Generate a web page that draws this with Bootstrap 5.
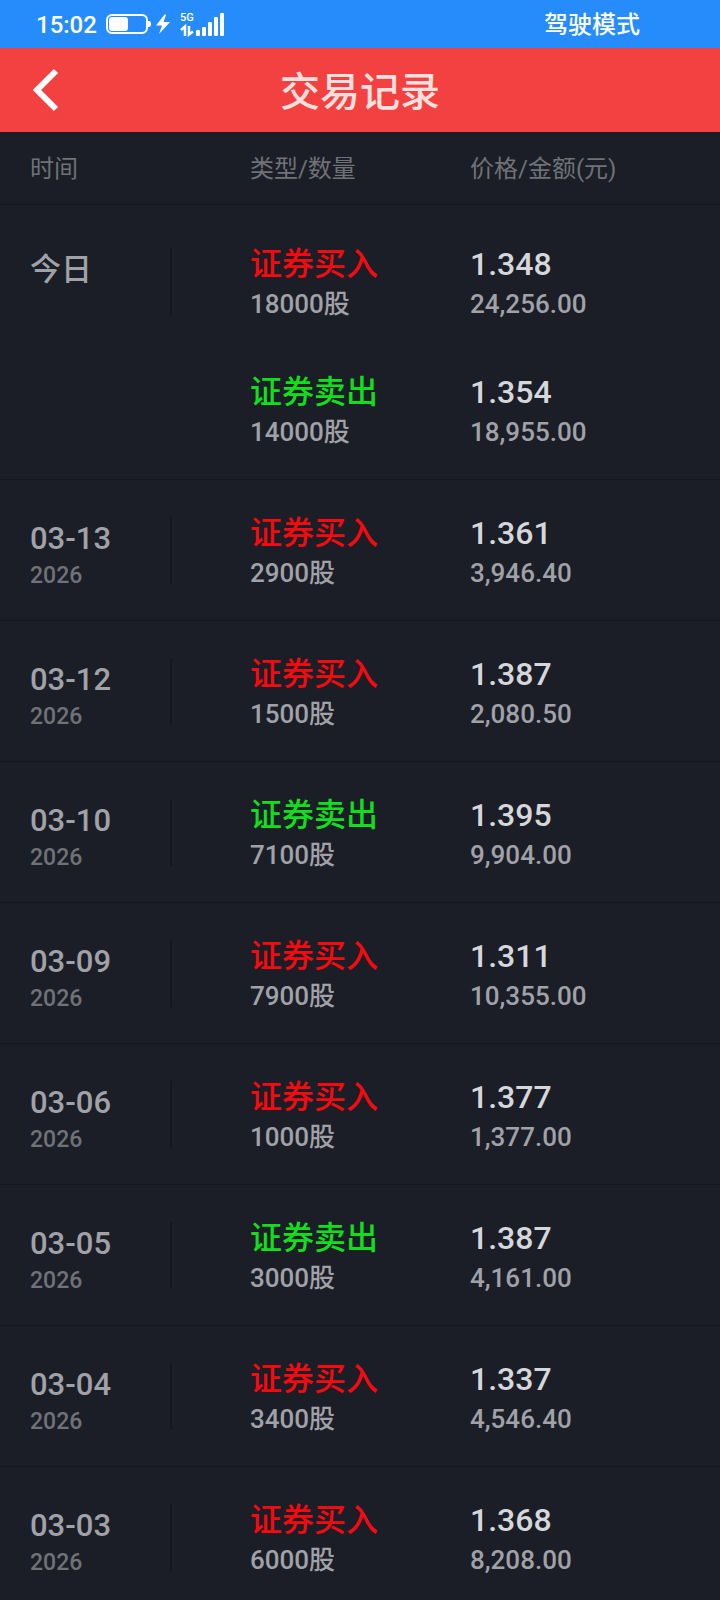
<!DOCTYPE html>
<html lang="zh-CN">
<head>
<meta charset="utf-8">
<meta name="viewport" content="width=device-width, initial-scale=1">
<title>交易记录</title>
<link href="https://cdn.jsdelivr.net/npm/bootstrap@5.3.0/dist/css/bootstrap.min.css" rel="stylesheet">
<style>
  body { background: #1b1e27; color: #a1a2a7; font-family: Roboto, "Noto Sans CJK SC", sans-serif; font-weight: 500; }
  .status-bar { height: 48px; background: #268cfb; color: #fff; padding: 2px 80px 0 36px; font-size: 24px; line-height: 46px; }
  .title-bar { height: 84px; background: #f34141; padding-top: 4px; }
  .title-bar h1 { font-size: 40px; line-height: 82px; font-weight: 500; color: #fde0dd; }
  .back-btn { left: 24px; top: 14px; width: 44px; height: 56px; }
  .records { table-layout: fixed; border-collapse: separate; border-spacing: 0; }
  .records th, .records td { padding: 0; vertical-align: top; }
  .col-day { width: 34.72%; }
  .col-kind { width: 30.56%; }
  .records thead th { height: 73px; padding-top: 19px; font-size: 24px; line-height: 36px; font-weight: 400; color: #707278; }
  .records .ps-day { padding-left: 30px; }
  .records thead th, .records .group-end { border-bottom: 1px solid #15171e; }
  .records tbody td, .records tbody th { padding-top: 33px; font-weight: 500; }
  .records tbody .group-end { padding-bottom: 27px; }
  .records .first-entry > * { padding-top: 39px; }
  .records .more-entry > * { padding-top: 48px; }
  .day-box { width: 142px; height: 67px; margin-top: 4px; padding-top: 2px; border-right: 2px solid #15171e; }
  .day-text { font-size: 31px; line-height: 40px; }
  .year-text { font-size: 23px; line-height: 34px; color: #707278; }
  .kind-text { font-size: 32px; line-height: 40px; }
  .buy { color: #f50a0f; }
  .sell { color: #12df1c; }
  .price-text { font-size: 32px; line-height: 40px; color: #d6d7db; }
  .sub-text { font-size: 26px; line-height: 40px; }
</style>
</head>
<body>
<div class="vh-100 d-flex flex-column overflow-hidden">
  <div class="status-bar d-flex align-items-center flex-shrink-0">
    <span>15:02</span>
    <svg class="ms-2" width="122" height="30" viewBox="0 0 122 30" fill="#fff" aria-hidden="true">
      <rect x="2" y="5" width="40" height="18" rx="5" fill="none" stroke="#fff" stroke-width="2"/>
      <rect x="4" y="7" width="19" height="14" rx="3"/>
      <path d="M43 11h1q2 0 2 3t-2 3h-1z"/>
      <path d="M60 4 51 15.500h6L54 24l11-12h-6.500L61 5z"/>
      <text x="75" y="11" font-size="11">5G</text>
      <path d="M80 26v-9.500l-4 3.500M84 16v8.500l4-3" fill="none" stroke="#fff" stroke-width="2.500"/>
      <g>
        <rect x="91" y="20" width="4" height="6" rx="1"/><rect x="97" y="17" width="4" height="9" rx="1"/>
        <rect x="103" y="12" width="4" height="14" rx="1"/><rect x="109" y="7" width="4" height="19" rx="1"/>
        <rect x="115" y="3" width="4" height="23" rx="1"/>
      </g>
    </svg>
    <span class="ms-auto">驾驶模式</span>
  </div>
  <header class="title-bar position-relative text-center flex-shrink-0">
    <button type="button" class="back-btn btn p-0 border-0 position-absolute d-flex" aria-label="返回">
      <svg width="44" height="56" viewBox="0 0 44 56" fill="none" stroke="#fff" stroke-width="6"><path d="M32 9 13 28 32 47"/></svg>
    </button>
    <h1 class="m-0">交易记录</h1>
  </header>
  <main class="flex-fill overflow-hidden">
    <table class="records w-100">
      <colgroup><col class="col-day"><col class="col-kind"><col></colgroup>
      <thead>
        <tr><th scope="col" class="ps-day">时间</th><th scope="col">类型/数量</th><th scope="col">价格/金额(元)</th></tr>
      </thead>
      <tbody id="entries"></tbody>
    </table>
  </main>
</div>
<script src="https://cdn.jsdelivr.net/npm/bootstrap@5.3.0/dist/js/bootstrap.bundle.min.js"></script>
<script>
  const days = [
    ['今日', '', [['buy', 18000, '1.348', '24,256.00'], ['sell', 14000, '1.354', '18,955.00']]],
    ['03-13', '2026', [['buy', 2900, '1.361', '3,946.40']]],
    ['03-12', '2026', [['buy', 1500, '1.387', '2,080.50']]],
    ['03-10', '2026', [['sell', 7100, '1.395', '9,904.00']]],
    ['03-09', '2026', [['buy', 7900, '1.311', '10,355.00']]],
    ['03-06', '2026', [['buy', 1000, '1.377', '1,377.00']]],
    ['03-05', '2026', [['sell', 3000, '1.387', '4,161.00']]],
    ['03-04', '2026', [['buy', 3400, '1.337', '4,546.40']]],
    ['03-03', '2026', [['buy', 6000, '1.368', '8,208.00']]]
  ];
  const kinds = { buy: '证券买入', sell: '证券卖出' };
  document.getElementById('entries').innerHTML = days.map(([day, year, list], d) =>
    list.map(([kind, qty, price, total], i) => {
      const end = i === list.length - 1 ? 'group-end' : '';
      const row = i > 0 ? 'more-entry' : d === 0 ? 'first-entry' : '';
      const dayCell = i > 0 ? '' : `<th scope="rowgroup" rowspan="${list.length}" class="ps-day group-end">
        <div class="day-box"><div class="day-text">${day}</div><div class="year-text">${year}</div></div></th>`;
      return `<tr class="${row}">${dayCell}
        <td class="${end}"><div class="kind-text ${kind}">${kinds[kind]}</div><div class="sub-text">${qty}股</div></td>
        <td class="${end}"><div class="price-text">${price}</div><div class="sub-text">${total}</div></td></tr>`;
    }).join('')).join('');
</script>
</body>
</html>
